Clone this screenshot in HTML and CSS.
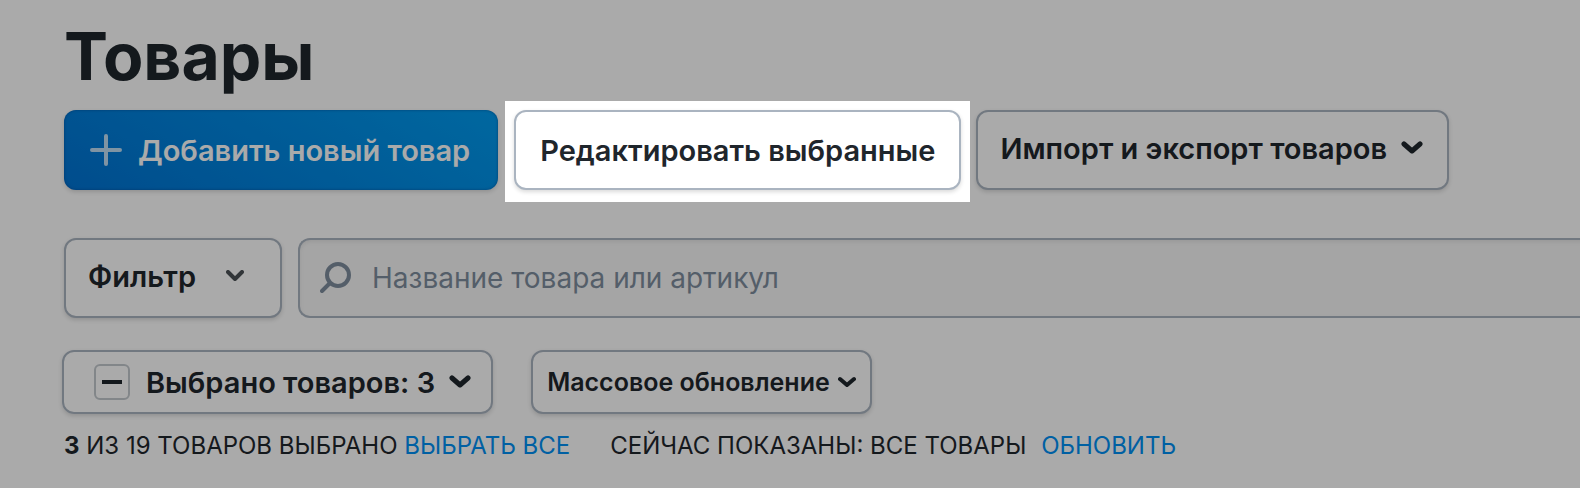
FILE: index.html
```html
<!DOCTYPE html>
<html lang="ru">

<head>
    <meta charset="UTF-8">
    <meta name="viewport" content="width=device-width, initial-scale=1.0">
    <title>Товары</title>
    <link rel="stylesheet" href="styles.css">
</head>

<body>
    <main class="page">
        <h1 class="title">Товары</h1>

        <div class="actions">
            <button type="button" class="btn btn-primary">
                <svg class="plus" width="32" height="32" viewBox="0 0 32 32" fill="none" stroke="currentColor" stroke-width="4" stroke-linecap="round" aria-hidden="true"><path d="M16 2v28M2 16h28" /></svg>
                Добавить новый товар
            </button>
            <div class="spotlight">
                <button type="button" class="btn btn-edit">Редактировать выбранные</button>
            </div>
            <button type="button" class="btn btn-menu btn-import" aria-haspopup="true">
                Импорт и экспорт товаров
                <svg width="22" height="14" viewBox="0 0 22 14" fill="none" stroke="currentColor" stroke-width="5" stroke-linecap="round" stroke-linejoin="round" aria-hidden="true"><path d="M3 3l8 7 8-7" /></svg>
            </button>
        </div>

        <div class="search-row">
            <button type="button" class="btn btn-menu btn-filter" aria-haspopup="true">
                Фильтр
                <svg width="18" height="12" viewBox="0 0 18 12" fill="none" stroke="currentColor" stroke-width="4" stroke-linecap="round" stroke-linejoin="round" aria-hidden="true"><path d="M2 2l7 7 7-7" /></svg>
            </button>
            <label class="search">
                <svg width="32" height="32" viewBox="0 0 32 32" fill="none" stroke="currentColor" stroke-width="4" stroke-linecap="round" aria-hidden="true"><circle cx="18" cy="13" r="11" /><path d="M10 21l-8 8" /></svg>
                <input type="search" class="search-input" placeholder="Название товара или артикул" aria-label="Название товара или артикул">
            </label>
        </div>

        <div class="bulk">
            <div class="selected">
                <input type="checkbox" class="check" aria-label="Выбрать товары">
                <button type="button" class="selected-btn" aria-haspopup="true">
                    Выбрано товаров: 3
                    <svg width="22" height="14" viewBox="0 0 22 14" fill="none" stroke="currentColor" stroke-width="5" stroke-linecap="round" stroke-linejoin="round" aria-hidden="true"><path d="M3 3l8 7 8-7" /></svg>
                </button>
            </div>
            <button type="button" class="btn btn-small" aria-haspopup="true">
                Массовое обновление
                <svg width="18" height="12" viewBox="0 0 18 12" fill="none" stroke="currentColor" stroke-width="4" stroke-linecap="round" stroke-linejoin="round" aria-hidden="true"><path d="M2 3l7 6 7-6" /></svg>
            </button>
        </div>

        <div class="status">
            <p><b>3</b> ИЗ 19 ТОВАРОВ ВЫБРАНО <a href="#all">ВЫБРАТЬ ВСЕ</a></p>
            <p>СЕЙЧАС ПОКАЗАНЫ: ВСЕ ТОВАРЫ <a href="#refresh" class="refresh">ОБНОВИТЬ</a></p>
        </div>
    </main>
</body>

</html>
```
FILE: styles.css
```css
:root {
    --text: #1f262c;
    --border: #aab4c0;
    --link: #0090f5;
    --muted: #7f8e9e;
    --dim: rgba(0, 0, 0, .333);
}

* {
    box-sizing: border-box;
}

body {
    margin: 0;
    background: #fff;
    color: var(--text);
    font-family: Inter, sans-serif;
    font-size: 28px;
    overflow-x: hidden;
}

.page {
    min-height: 100vh;
    padding: 16px 0 16px 64px;
}

.title {
    margin: 0 0 14px;
    font-size: 66px;
    line-height: 80px;
    font-weight: 700;
}

.actions,
.search-row,
.bulk {
    display: flex;
    align-items: center;
}

.actions {
    gap: 16px;
    margin-bottom: 48px;
}

.btn {
    display: flex;
    align-items: center;
    justify-content: center;
    flex: none;
    height: 80px;
    padding: 0 22px;
    border: 2px solid var(--border);
    border-radius: 12px;
    background: #fff;
    box-shadow: 0 2px 4px rgba(0, 0, 0, .15);
    color: var(--text);
    font: inherit;
    font-size: 29px;
    font-weight: 600;
    white-space: nowrap;
}

.btn-primary {
    gap: 16px;
    border: 0;
    padding: 0 28px 0 26px;
    background: linear-gradient(30deg, #0073d3, #009cf0);
    box-shadow: inset 0 0 3px rgba(0, 60, 130, .6), 0 2px 4px rgba(0, 0, 0, .15);
    color: #fff;
}

.plus {
    opacity: .75;
}

/* everything outside this box is dimmed by its shadow */
.spotlight {
    position: relative;
    z-index: 1;
    flex: none;
    margin: -9px -10px -12px -9px;
    padding: 9px 9px 12px;
    background: #fff;
    box-shadow: 0 0 0 9999px var(--dim);
}

.btn-menu {
    gap: 14px;
    padding-bottom: 4px;
}

.btn-edit {
    padding: 0 24px;
}

.btn-import {
    padding-right: 24px;
}

.search-row {
    gap: 16px;
    margin-bottom: 32px;
}

.btn-filter {
    gap: 30px;
    padding-right: 36px;
}

.btn-filter svg {
    opacity: .8;
}

.search {
    display: flex;
    align-items: center;
    flex: 1;
    gap: 20px;
    height: 80px;
    margin-right: -8px;
    padding-left: 20px;
    border: 2px solid var(--border);
    border-right: 0;
    border-radius: 12px 0 0 12px;
    background: #f8f8f8;
    box-shadow: inset 0 2px 4px rgba(0, 0, 0, .08);
    color: var(--muted);
}

.search-input {
    flex: 1;
    border: 0;
    padding: 0;
    outline: 0;
    background: none;
    color: var(--text);
    font: inherit;
}

.search-input::placeholder {
    color: var(--muted);
    opacity: 1;
}

.bulk {
    gap: 38px;
    margin: 0 0 16px -2px;
}

.selected {
    display: flex;
    align-items: center;
    gap: 16px;
    height: 64px;
    padding: 0 20px 0 30px;
    border: 2px solid var(--border);
    border-radius: 12px;
    box-shadow: 0 2px 4px rgba(0, 0, 0, .15);
}

.check {
    display: grid;
    place-items: center;
    appearance: none;
    width: 36px;
    height: 36px;
    margin: 0;
    border: 2px solid #c4c9ce;
    border-radius: 6px;
}

.check::before {
    content: "";
    width: 20px;
    height: 4px;
    background: var(--text);
}

.selected-btn {
    display: flex;
    align-items: center;
    gap: 14px;
    padding: 0;
    border: 0;
    background: none;
    color: var(--text);
    font: inherit;
    font-size: 29px;
    font-weight: 600;
    white-space: nowrap;
}

.btn-small {
    gap: 8px;
    height: 64px;
    padding: 0 14px;
    font-size: 25px;
}

.status {
    display: flex;
    gap: 40px;
    font-size: 24px;
    line-height: 32px;
}

.status p {
    margin: 0;
    white-space: nowrap;
}

.status a {
    color: var(--link);
    text-decoration: none;
}

.status .refresh {
    margin-left: 8px;
}
```
